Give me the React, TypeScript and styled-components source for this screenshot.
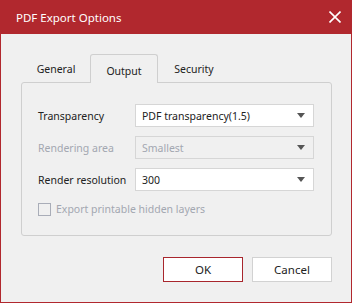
import React from "react";
import styled, { createGlobalStyle } from "styled-components";

const Global = createGlobalStyle`
  html, body { margin: 0; padding: 0; background: #f0f0f0; }
  * { box-sizing: border-box; }
`;

const RED = "#b1282e";
const FONT = `"Noto Sans", "Open Sans", sans-serif`;

const Window = styled.div`
  width: 352px;
  height: 303px;
  display: flex;
  flex-direction: column;
  background: #f0f0f0;
  border: 1px solid ${RED};
  border-top: none;
  font-family: ${FONT};
  font-size: 10.5px;
  color: #222;
`;

const TitleBar = styled.div`
  height: 34px;
  margin: 0 -1px;
  background: ${RED};
  display: flex;
  align-items: center;
  justify-content: space-between;
  padding: 0 11px 0 16px;
  color: #fff;
  font-size: 11.5px;
`;

const CloseBtn = styled.div`
  width: 12px;
  height: 12px;
  display: flex;
`;

const Body = styled.div`
  flex: 1;
  display: flex;
  flex-direction: column;
  padding: 20px 19px 0 20px;
`;

const Tabs = styled.div`
  display: flex;
  height: 28px;
  padding-left: 1px;
`;

const Tab = styled.div<{ $active?: boolean; $w: number }>`
  width: ${(p) => p.$w}px;
  height: ${(p) => (p.$active ? "29px" : "28px")};
  display: flex;
  align-items: center;
  justify-content: center;
  padding-top: ${(p) => (p.$active ? "3px" : "0")};
  background: #f0f0f0;
  border: 1px solid ${(p) => (p.$active ? "#cfcfcf" : "transparent")};
  border-bottom: none;
  border-radius: 3px 3px 0 0;
  position: relative;
  z-index: 1;
`;

const Panel = styled.div`
  height: 154px;
  border: 1px solid #cfcfcf;
  border-radius: 3px;
  padding: 21px 16px 0 16px;
  display: flex;
  flex-direction: column;
  gap: 9px;
`;

const Row = styled.div`
  display: grid;
  grid-template-columns: 97px 179px;
  align-items: center;
  height: 23px;
`;

const Label = styled.div<{ $disabled?: boolean }>`
  color: ${(p) => (p.$disabled ? "#a3a7b0" : "#222")};
  white-space: nowrap;
`;

const Select = styled.div<{ $disabled?: boolean }>`
  height: 23px;
  display: flex;
  align-items: center;
  justify-content: space-between;
  padding: 0 8px 0 6px;
  background: ${(p) => (p.$disabled ? "#f0f0f0" : "#fff")};
  border: 1px solid #d6d6d6;
  color: ${(p) => (p.$disabled ? "#a3a7b0" : "#222")};
`;

const Arrow = styled.span`
  width: 0;
  height: 0;
  border-left: 4px solid transparent;
  border-right: 4px solid transparent;
  border-top: 5px solid #555;
`;

const CheckRow = styled.div`
  display: flex;
  align-items: center;
  gap: 5px;
  margin-top: 2px;
  color: #a3a7b0;
`;

const Check = styled.span`
  width: 13px;
  height: 13px;
  border: 1px solid #a9adb8;
  background: #f0f0f0;
`;

const Footer = styled.div`
  display: flex;
  justify-content: flex-end;
  gap: 9px;
  margin-top: 21px;
`;

const Button = styled.div<{ $primary?: boolean }>`
  width: 80px;
  height: 25px;
  display: flex;
  align-items: center;
  justify-content: center;
  background: #fff;
  border: 1px solid ${(p) => (p.$primary ? "#a8262d" : "#d2d2d2")};
  color: #222;
  font-size: 11.5px;
`;

export default function App() {
  return (
    <>
      <Global />
      <Window>
        <TitleBar>
          <span>PDF Export Options</span>
          <CloseBtn>
            <svg width="12" height="12" viewBox="0 0 12 12">
              <path d="M0.5 0.5 L11.5 11.5 M11.5 0.5 L0.5 11.5" stroke="#fff" strokeWidth="1.6" />
            </svg>
          </CloseBtn>
        </TitleBar>
        <Body>
          <Tabs>
            <Tab $w={68}>General</Tab>
            <Tab $w={68} $active>Output</Tab>
            <Tab $w={72}>Security</Tab>
          </Tabs>
          <Panel>
            <Row>
              <Label>Transparency</Label>
              <Select>
                <span>PDF transparency(1.5)</span>
                <Arrow />
              </Select>
            </Row>
            <Row>
              <Label $disabled>Rendering area</Label>
              <Select $disabled>
                <span>Smallest</span>
                <Arrow />
              </Select>
            </Row>
            <Row>
              <Label>Render resolution</Label>
              <Select>
                <span>300</span>
                <Arrow />
              </Select>
            </Row>
            <CheckRow>
              <Check />
              <span>Export printable hidden layers</span>
            </CheckRow>
          </Panel>
          <Footer>
            <Button $primary>OK</Button>
            <Button>Cancel</Button>
          </Footer>
        </Body>
      </Window>
    </>
  );
}
